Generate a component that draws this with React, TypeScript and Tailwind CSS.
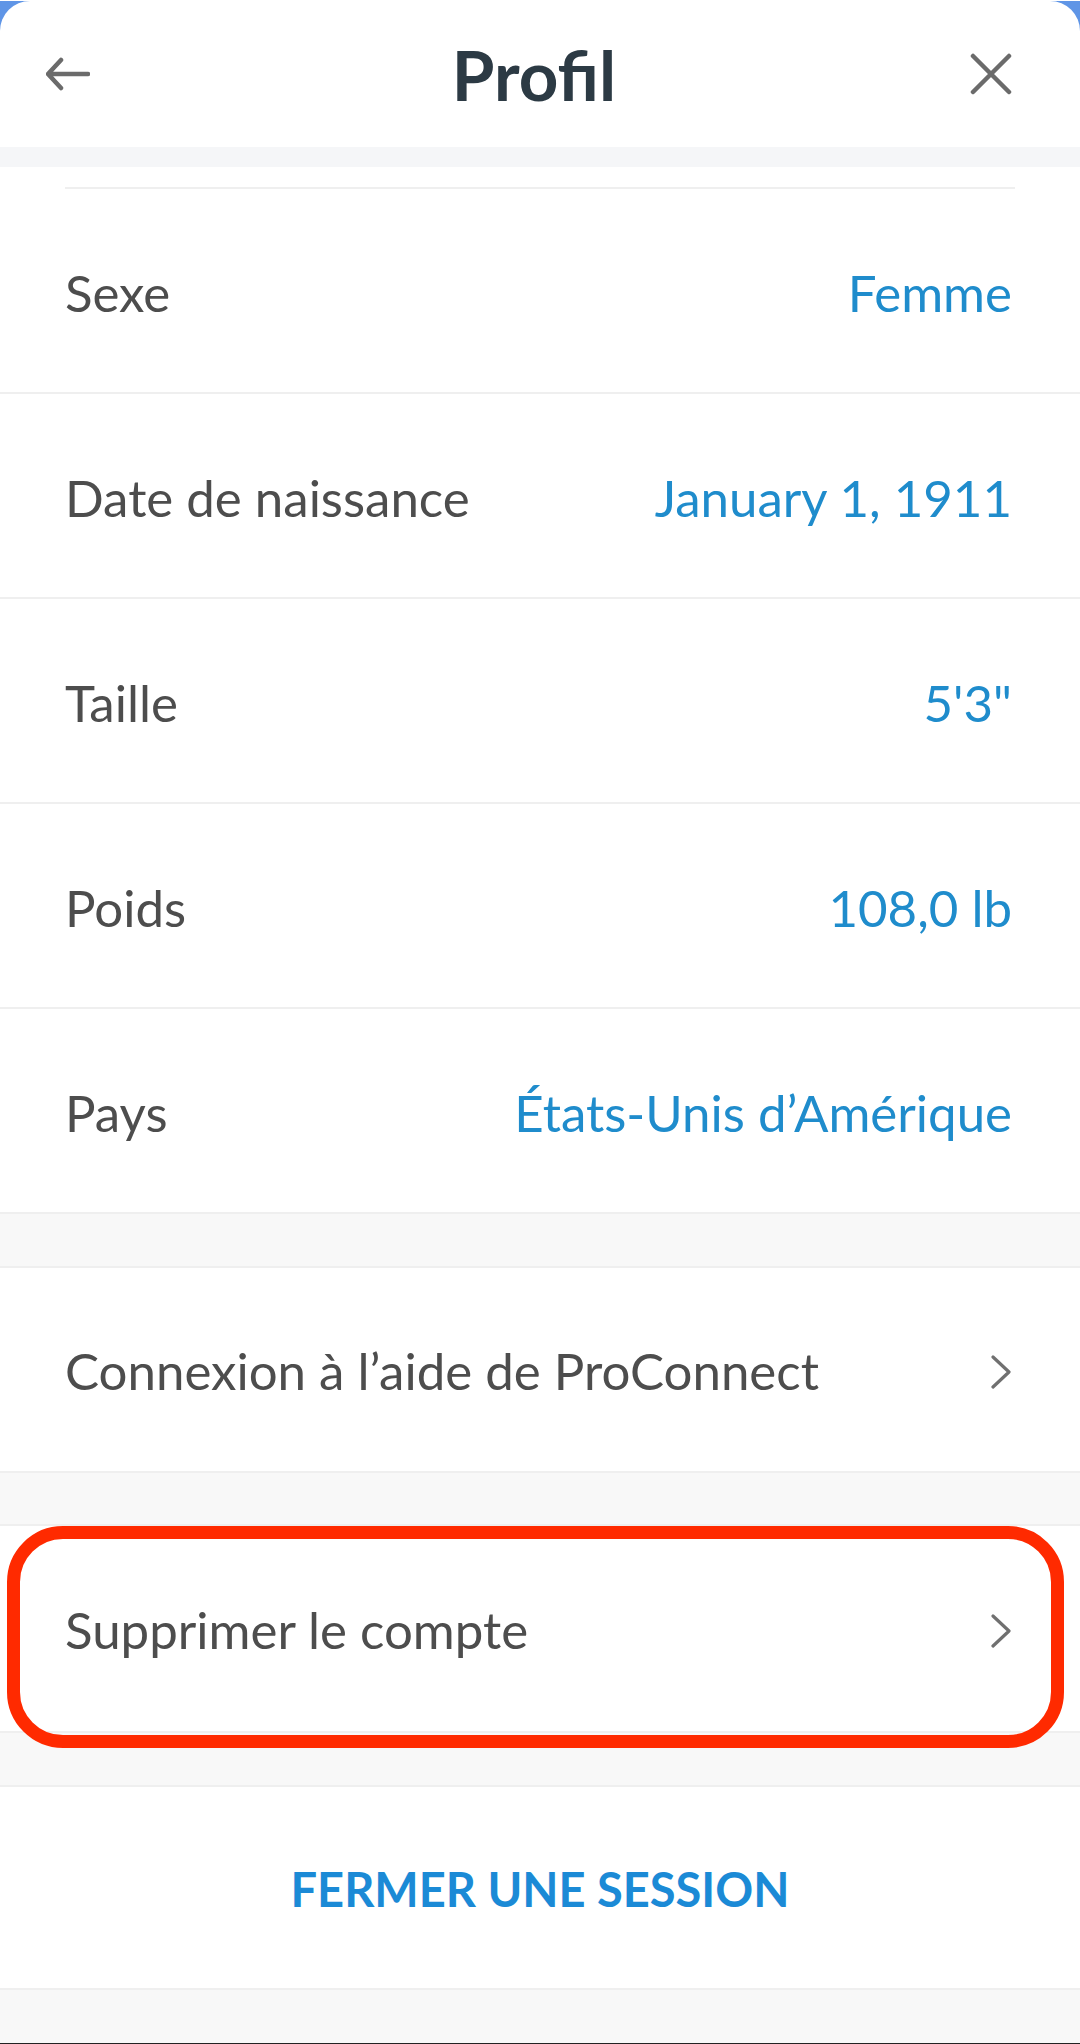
import React from "react";

const font = { fontFamily: "Lato, 'Open Sans', 'Liberation Sans', sans-serif" };

function Row({ label, value }: { label: string; value: string }) {
  return (
    <div className="flex h-[205px] items-center justify-between border-b-2 border-[#efefef] bg-white pl-[65px] pr-[68px] pt-[6px]">
      <span className="text-[51px] text-[#4d4d4d]">{label}</span>
      <span className="text-[51px] text-[#1f8ccc]">{value}</span>
    </div>
  );
}

function Chevron() {
  return (
    <svg width="22" height="34" viewBox="0 0 22 34" fill="none">
      <path d="M3 2 L19 17 L3 32" stroke="#707070" strokeWidth="3.2" strokeLinecap="round" strokeLinejoin="round" />
    </svg>
  );
}

function LinkRow({ label }: { label: string }) {
  return (
    <div className="flex h-[205px] items-center justify-between border-b-2 border-[#efefef] bg-white pl-[65px] pr-[68px] pt-[4px]">
      <span className="text-[51px] text-[#4d4d4d]">{label}</span>
      <Chevron />
    </div>
  );
}

function Band({ h }: { h: string }) {
  return <div className={`${h} border-b-2 border-[#efefef] bg-[#f8f8f8]`} />;
}

export default function App() {
  return (
    <div className="min-h-[2044px] w-[1080px] bg-[#5f95e6]" style={font}>
      <div className="mt-[1px] overflow-hidden rounded-t-[30px] bg-white">
        {/* Header */}
        <div className="flex h-[146px] items-center pl-[46px] pr-[68px]">
          <svg width="44" height="34" viewBox="0 0 44 34" fill="none">
            <path d="M3 17 H42 M15 3 L2 17 L15 31" stroke="#6b6b6b" strokeWidth="4.5" strokeLinecap="round" strokeLinejoin="round" />
          </svg>
          <div className="flex-1 pl-[8px] text-center text-[69px] font-bold leading-none text-[#2c3a44]">Profil</div>
          <svg width="42" height="42" viewBox="0 0 42 42" fill="none">
            <path d="M3 3 L39 39 M39 3 L3 39" stroke="#6b6b6b" strokeWidth="4.5" strokeLinecap="round" />
          </svg>
        </div>
        <div className="h-[20px] bg-[#f5f6f8]" />
        <div className="h-[22px] bg-white px-[65px]">
          <div className="h-[22px] border-b-2 border-[#efefef]" />
        </div>

        <Row label="Sexe" value="Femme" />
        <Row label="Date de naissance" value="January 1, 1911" />
        <Row label="Taille" value={"5'3\""} />
        <Row label="Poids" value="108,0 lb" />
        <Row label="Pays" value="États-Unis d’Amérique" />

        <Band h="h-[54px]" />
        <LinkRow label="Connexion à l’aide de ProConnect" />
        <Band h="h-[53px]" />
        <div className="relative">
          <div className="flex h-[207px] items-center justify-between border-b-2 border-[#efefef] bg-white pl-[65px] pr-[68px] pt-[4px]">
            <span className="text-[51px] text-[#4d4d4d]">Supprimer le compte</span>
            <Chevron />
          </div>
          <div className="pointer-events-none absolute left-[7px] right-[16px] top-0 h-[222px] rounded-[56px] border-[13px] border-[#ff2a00]" />
        </div>
        <Band h="h-[54px]" />
        <div className="flex h-[203px] items-center justify-center border-b-2 border-[#efefef] bg-white pt-[4px]">
          <span className="text-[47px] font-bold text-[#1b8ad6]">FERMER UNE SESSION</span>
        </div>
        <div className="h-[54px] border-b-[1px] border-[#222] bg-[#f8f8f8]" />
      </div>
    </div>
  );
}
